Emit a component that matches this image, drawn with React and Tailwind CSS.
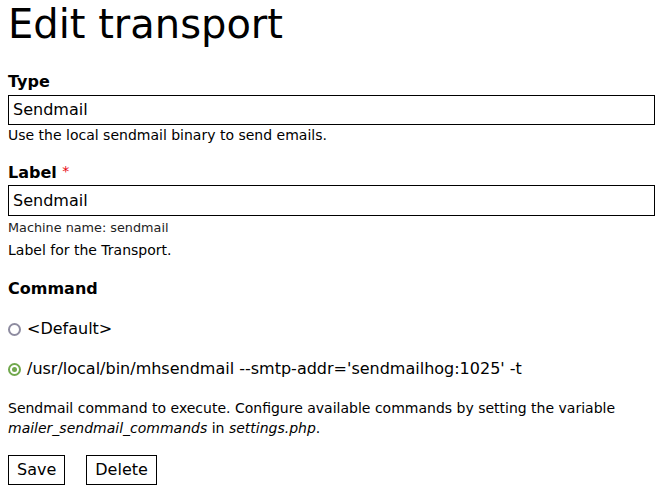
export default function App() {
  return (
    <div className="px-2 text-black bg-white min-h-screen" style={{ fontFamily: '"DejaVu Sans", sans-serif' }}>
      <h1 className="text-[40px] leading-[48px] pt-0">Edit transport</h1>

      <div className="mt-[24px]">
        <label className="block font-bold text-[16px] leading-[20px]">Type</label>
        <div className="mt-[3px] border border-black h-[30px] w-[647px] px-1 flex items-center text-[16px]">Sendmail</div>
        <div className="text-[14px] leading-[20px]">Use the local sendmail binary to send emails.</div>
      </div>

      <div className="mt-[18px]">
        <label className="block font-bold text-[16px] leading-[20px]">
          Label <span className="text-red-600 font-normal text-[14px] relative -top-[2px]">*</span>
        </label>
        <div className="mt-[2px] border border-black h-[31px] w-[647px] px-1 flex items-center text-[16px]">Sendmail</div>
        <div className="text-[12.8px] leading-[16px] mt-[4px] text-[#222]">Machine name: sendmail</div>
        <div className="text-[14px] leading-[20px] mt-[4px]">Label for the Transport.</div>
      </div>

      <div className="mt-[19px]">
        <div className="font-bold text-[16px] leading-[20px]">Command</div>
        <div className="mt-[20px] flex items-center gap-[6px] text-[16px] leading-[20px]">
          <span className="w-[13px] h-[13px] rounded-full border-2 border-[#8e8ca0] inline-block" />
          <span>&lt;Default&gt;</span>
        </div>
        <div className="mt-[20px] flex items-center gap-[6px] text-[16px] leading-[20px]">
          <span className="w-[13px] h-[13px] rounded-full border-2 border-[#71a84d] inline-flex items-center justify-center">
            <span className="w-[5px] h-[5px] rounded-full bg-[#71a84d]" />
          </span>
          <span>/usr/local/bin/mhsendmail --smtp-addr='sendmailhog:1025' -t</span>
        </div>
        <div className="mt-[19px] text-[14px] leading-[20px]">
          Sendmail command to execute. Configure available commands by setting the variable
          <br />
          <em>mailer_sendmail_commands</em> in <em>settings.php</em>.
        </div>
      </div>

      <div className="mt-[17px] flex gap-[21px] text-[16px]">
        <button className="border border-black h-[30px] px-[8px]">Save</button>
        <button className="border border-black h-[30px] px-[8px]">Delete</button>
      </div>
    </div>
  );
}
